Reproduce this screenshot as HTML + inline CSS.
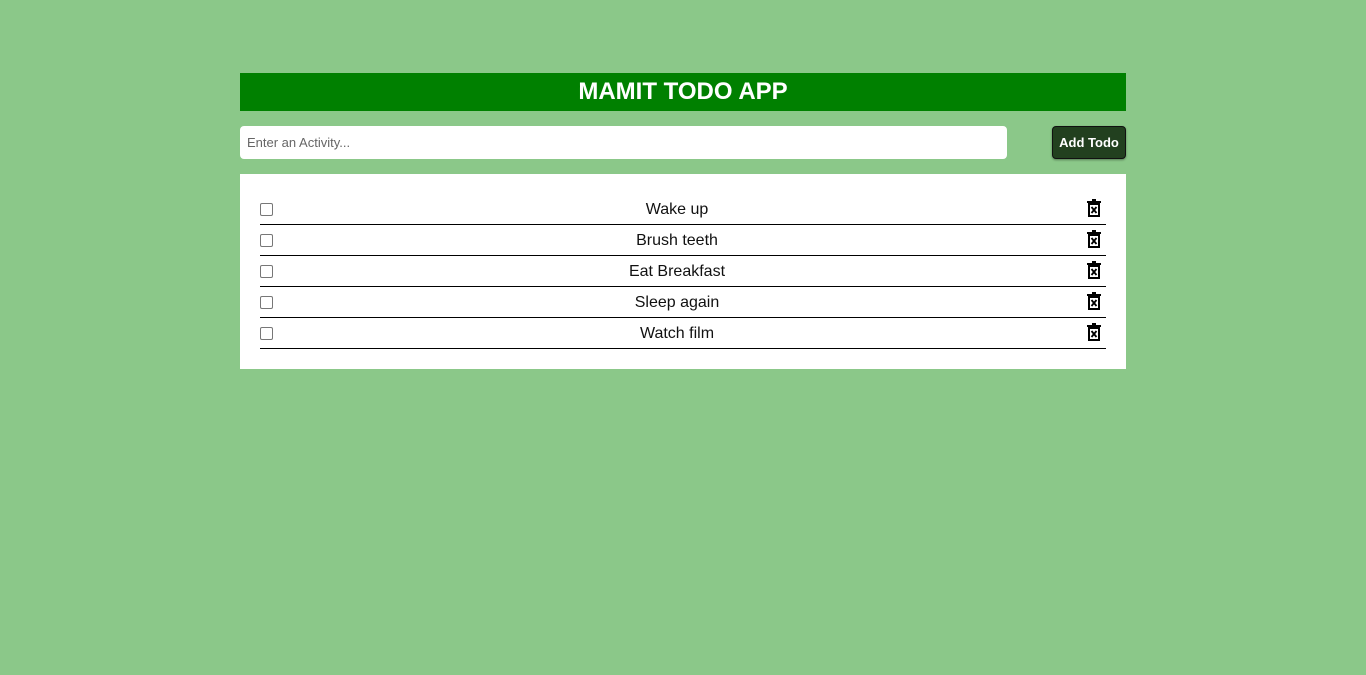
<!DOCTYPE html>
<html><head><style>
*{margin:0;padding:0;box-sizing:border-box}
body{background:#8bc889;font-family:"Liberation Sans",Arial,sans-serif;width:1366px;height:675px;position:relative}
.h{position:absolute;left:240px;top:73px;width:886px;height:38px;background:#008000;color:#fff;font-weight:bold;font-size:24px;text-align:center;line-height:38px}
.in{position:absolute;left:240px;top:126px;width:767px;height:33px;background:#fff;border-radius:4px;font-size:13px;color:#666;padding-left:7px;line-height:33px}
.btn{position:absolute;left:1052px;top:126px;width:74px;height:33px;background:#22401f;border:1px solid #111;border-radius:4px;color:#fff;font-weight:bold;font-size:13px;text-align:center;line-height:31px;box-shadow:0 1px 2px rgba(0,0,0,.4)}
.list{position:absolute;left:240px;top:174px;width:886px;height:195px;background:#fff;padding:20px 20px 0}
.row{height:31px;border-bottom:1px solid #000;position:relative;font-size:16px;text-align:center;line-height:31px;color:#111;padding-right:12px}
.cb{position:absolute;left:0;top:9px;width:13px;height:13px;border:1px solid #777;border-radius:2px;background:#fff}
.tr{position:absolute;right:5px;top:5px}
</style></head><body>
<div class="h">MAMIT TODO APP</div>
<div class="in">Enter an Activity...</div>
<div class="btn">Add Todo</div>
<div class="list">
<div class="row"><span class="cb"></span>Wake up<svg class="tr" width="14" height="18" viewBox="0 0 14 18"><rect x="0" y="2" width="14" height="2" fill="#000"/><rect x="5" y="0" width="4" height="2" fill="#000"/><rect x="2" y="5" width="10" height="12" fill="none" stroke="#000" stroke-width="2"/><path d="M4.5 8l5 6M9.5 8l-5 6" stroke="#000" stroke-width="1.8"/></svg></div>
<div class="row"><span class="cb"></span>Brush teeth<svg class="tr" width="14" height="18" viewBox="0 0 14 18"><rect x="0" y="2" width="14" height="2" fill="#000"/><rect x="5" y="0" width="4" height="2" fill="#000"/><rect x="2" y="5" width="10" height="12" fill="none" stroke="#000" stroke-width="2"/><path d="M4.5 8l5 6M9.5 8l-5 6" stroke="#000" stroke-width="1.8"/></svg></div>
<div class="row"><span class="cb"></span>Eat Breakfast<svg class="tr" width="14" height="18" viewBox="0 0 14 18"><rect x="0" y="2" width="14" height="2" fill="#000"/><rect x="5" y="0" width="4" height="2" fill="#000"/><rect x="2" y="5" width="10" height="12" fill="none" stroke="#000" stroke-width="2"/><path d="M4.5 8l5 6M9.5 8l-5 6" stroke="#000" stroke-width="1.8"/></svg></div>
<div class="row"><span class="cb"></span>Sleep again<svg class="tr" width="14" height="18" viewBox="0 0 14 18"><rect x="0" y="2" width="14" height="2" fill="#000"/><rect x="5" y="0" width="4" height="2" fill="#000"/><rect x="2" y="5" width="10" height="12" fill="none" stroke="#000" stroke-width="2"/><path d="M4.5 8l5 6M9.5 8l-5 6" stroke="#000" stroke-width="1.8"/></svg></div>
<div class="row"><span class="cb"></span>Watch film<svg class="tr" width="14" height="18" viewBox="0 0 14 18"><rect x="0" y="2" width="14" height="2" fill="#000"/><rect x="5" y="0" width="4" height="2" fill="#000"/><rect x="2" y="5" width="10" height="12" fill="none" stroke="#000" stroke-width="2"/><path d="M4.5 8l5 6M9.5 8l-5 6" stroke="#000" stroke-width="1.8"/></svg></div>
</div>
</body></html>
